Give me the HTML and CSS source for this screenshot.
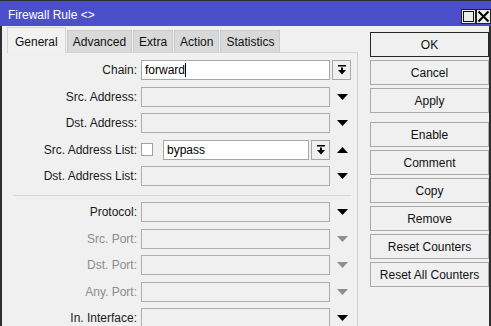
FILE: index.html
```html
<!DOCTYPE html>
<html lang="en-US">
<head>
   <meta charset="UTF-8">
   <meta name="viewport" content="width=device-width, initial-scale=1.0">
   <title>Firewall Rule</title>
   <link rel="stylesheet" href="styles.css">
</head>
<body>
   <div class="window">
      <div class="titlebar">
         <span class="title">Firewall Rule &lt;&gt;</span>
         <div class="tb-btns">
            <span class="tb-btn"><span class="max-box"></span></span>
            <span class="tb-btn">
               <svg width="13" height="13" viewBox="0 0 13 13"><path d="M1.5 1.5 L11.5 11.5 M11.5 1.5 L1.5 11.5" stroke="#000" stroke-width="2"/></svg>
            </span>
         </div>
      </div>
      <div class="main">
         <div class="left">
            <div class="tabs">
               <span class="tab active">General</span>
               <span class="tab">Advanced</span>
               <span class="tab">Extra</span>
               <span class="tab">Action</span>
               <span class="tab">Statistics</span>
            </div>
            <div class="panel">
               <div class="row">
                  <label>Chain:</label>
                  <div class="field"><span class="input white">forward<span class="caret"></span></span></div>
                  <span class="drop-btn">
                     <svg width="10" height="10" viewBox="0 0 10 10"><rect x="1" y="0" width="8" height="1.5" fill="#000"/><rect x="4" y="2.5" width="2" height="3" fill="#000"/><polygon points="1,5 9,5 5,9.5" fill="#000"/></svg>
                  </span>
               </div>
               <div class="row">
                  <label>Src. Address:</label>
                  <div class="field"><span class="input"></span></div>
                  <span class="arrow"><svg width="11" height="6" viewBox="0 0 11 6"><polygon points="0,0 11,0 5.5,6" fill="#000"/></svg></span>
               </div>
               <div class="row">
                  <label>Dst. Address:</label>
                  <div class="field"><span class="input"></span></div>
                  <span class="arrow"><svg width="11" height="6" viewBox="0 0 11 6"><polygon points="0,0 11,0 5.5,6" fill="#000"/></svg></span>
               </div>
               <div class="row">
                  <label>Src. Address List:</label>
                  <div class="field">
                     <span class="check"></span>
                     <span class="input white">bypass</span>
                     <span class="drop-btn small">
                        <svg width="10" height="10" viewBox="0 0 10 10"><rect x="1" y="0" width="8" height="1.5" fill="#000"/><rect x="4" y="2.5" width="2" height="3" fill="#000"/><polygon points="1,5 9,5 5,9.5" fill="#000"/></svg>
                     </span>
                  </div>
                  <span class="arrow"><svg width="11" height="6" viewBox="0 0 11 6"><polygon points="0,6 11,6 5.5,0" fill="#000"/></svg></span>
               </div>
               <div class="row">
                  <label>Dst. Address List:</label>
                  <div class="field"><span class="input"></span></div>
                  <span class="arrow"><svg width="11" height="6" viewBox="0 0 11 6"><polygon points="0,0 11,0 5.5,6" fill="#000"/></svg></span>
               </div>
               <div class="sep"></div>
               <div class="row">
                  <label>Protocol:</label>
                  <div class="field"><span class="input"></span></div>
                  <span class="arrow"><svg width="11" height="6" viewBox="0 0 11 6"><polygon points="0,0 11,0 5.5,6" fill="#000"/></svg></span>
               </div>
               <div class="row disabled">
                  <label>Src. Port:</label>
                  <div class="field"><span class="input"></span></div>
                  <span class="arrow"><svg width="11" height="6" viewBox="0 0 11 6"><polygon points="0,0 11,0 5.5,6" fill="#8e8e8e"/></svg></span>
               </div>
               <div class="row disabled">
                  <label>Dst. Port:</label>
                  <div class="field"><span class="input"></span></div>
                  <span class="arrow"><svg width="11" height="6" viewBox="0 0 11 6"><polygon points="0,0 11,0 5.5,6" fill="#8e8e8e"/></svg></span>
               </div>
               <div class="row disabled">
                  <label>Any. Port:</label>
                  <div class="field"><span class="input"></span></div>
                  <span class="arrow"><svg width="11" height="6" viewBox="0 0 11 6"><polygon points="0,0 11,0 5.5,6" fill="#8e8e8e"/></svg></span>
               </div>
               <div class="row">
                  <label>In. Interface:</label>
                  <div class="field"><span class="input"></span></div>
                  <span class="arrow"><svg width="11" height="6" viewBox="0 0 11 6"><polygon points="0,0 11,0 5.5,6" fill="#000"/></svg></span>
               </div>
            </div>
         </div>
         <div class="actions">
            <button class="default">OK</button>
            <button>Cancel</button>
            <button>Apply</button>
            <button class="group">Enable</button>
            <button>Comment</button>
            <button>Copy</button>
            <button>Remove</button>
            <button>Reset Counters</button>
            <button>Reset All Counters</button>
         </div>
      </div>
   </div>
</body>
</html>
```
FILE: styles.css
```css
* {
   box-sizing: border-box;
   font-family: "Liberation Sans", Arial, sans-serif;
   font-size: 12px;
}
html, body {
   margin: 0;
   padding: 0;
   background: #f0f0f0;
   overflow: hidden;
}
.window {
   width: 491px;
   height: 326px;
   border-top: 1px solid #2e2e2e;
   display: flex;
   flex-direction: column;
}
.titlebar {
   height: 25px;
   background: #4b4fca;
   display: flex;
   align-items: center;
   justify-content: space-between;
   padding: 2px 0 0 8px;
}
.title {
   color: #fff;
}
.tb-btns {
   display: flex;
   align-self: flex-end;
   margin-bottom: 2px;
}
.tb-btn {
   width: 15px;
   height: 15px;
   background: #ececec;
   border: 1px solid #222;
   display: flex;
   align-items: center;
   justify-content: center;
}
.max-box {
   width: 11px;
   height: 11px;
   border: 1px solid #111;
}
.main {
   flex: 1;
   display: flex;
   border-left: 2px solid #2e2e2e;
   border-right: 2px solid #2e2e2e;
   min-height: 0;
}
.left {
   width: 356px;
   padding-left: 5px;
   display: flex;
   flex-direction: column;
}
.tabs {
   display: flex;
   gap: 1px;
   margin-top: 1px;
   height: 26px;
   align-items: flex-end;
}
.tab {
   height: 22px;
   line-height: 22px;
   padding: 0 5px;
   background: #d9d9d9;
   border: 1px solid #cacaca;
   border-bottom: none;
   color: #111;
}
.tab.active {
   height: 26px;
   line-height: 28px;
   padding: 0 7px;
   background: #f2f2f2;
   border-color: #d6d6d6;
   position: relative;
   z-index: 1;
   margin-bottom: -1px;
}
.panel {
   flex: 1;
   border-top: 1px solid #d6d6d6;
   border-right: 1px solid #cfcfcf;
   padding-top: 7px;
   display: flex;
   flex-direction: column;
   gap: 6.5px;
}
.row {
   display: grid;
   grid-template-columns: 130px 189px 20px;
   column-gap: 4px;
   height: 20px;
   flex-shrink: 0;
   align-items: center;
}
.row .drop-btn, .row .arrow {
   margin-left: -2px;
}
label {
   text-align: right;
   color: #1a1a1a;
   white-space: nowrap;
}
.disabled label {
   color: #8c8c8c;
}
.field {
   display: flex;
   align-items: center;
   height: 20px;
}
.input {
   flex: 1;
   height: 20px;
   border: 1px solid #adadad;
   background: #f0f0f0;
   line-height: 18px;
   padding-left: 3px;
   color: #000;
}
.input.white {
   background: #fff;
   border-color: #a6a6a6;
}
.caret {
   display: inline-block;
   width: 1px;
   height: 14px;
   background: #000;
   vertical-align: -3px;
}
.check {
   width: 12px;
   height: 13px;
   border: 1px solid #a0a0a0;
   background: #fff;
   margin-right: 10px;
}
.drop-btn {
   width: 19px;
   height: 20px;
   border: 1px solid #a6a6a6;
   background: #f0f0f0;
   display: flex;
   align-items: center;
   justify-content: center;
}
.drop-btn.small {
   margin-left: 2px;
}
.arrow {
   display: flex;
   align-items: center;
   justify-content: center;
   width: 20px;
}
.sep {
   height: 1px;
   background: #d7d7d7;
   margin: 2px 6px 0 6px;
   flex-shrink: 0;
}
.actions {
   padding: 6px 0 0 12px;
   display: flex;
   flex-direction: column;
   gap: 3px;
}
.actions button {
   width: 119px;
   height: 25px;
   border: 1px solid #a9a9a9;
   background: #f0f0f0;
   color: #111;
   padding: 0;
}
.actions button.default {
   border-color: #262626;
}
.actions button.group {
   margin-top: 6px;
}
```
